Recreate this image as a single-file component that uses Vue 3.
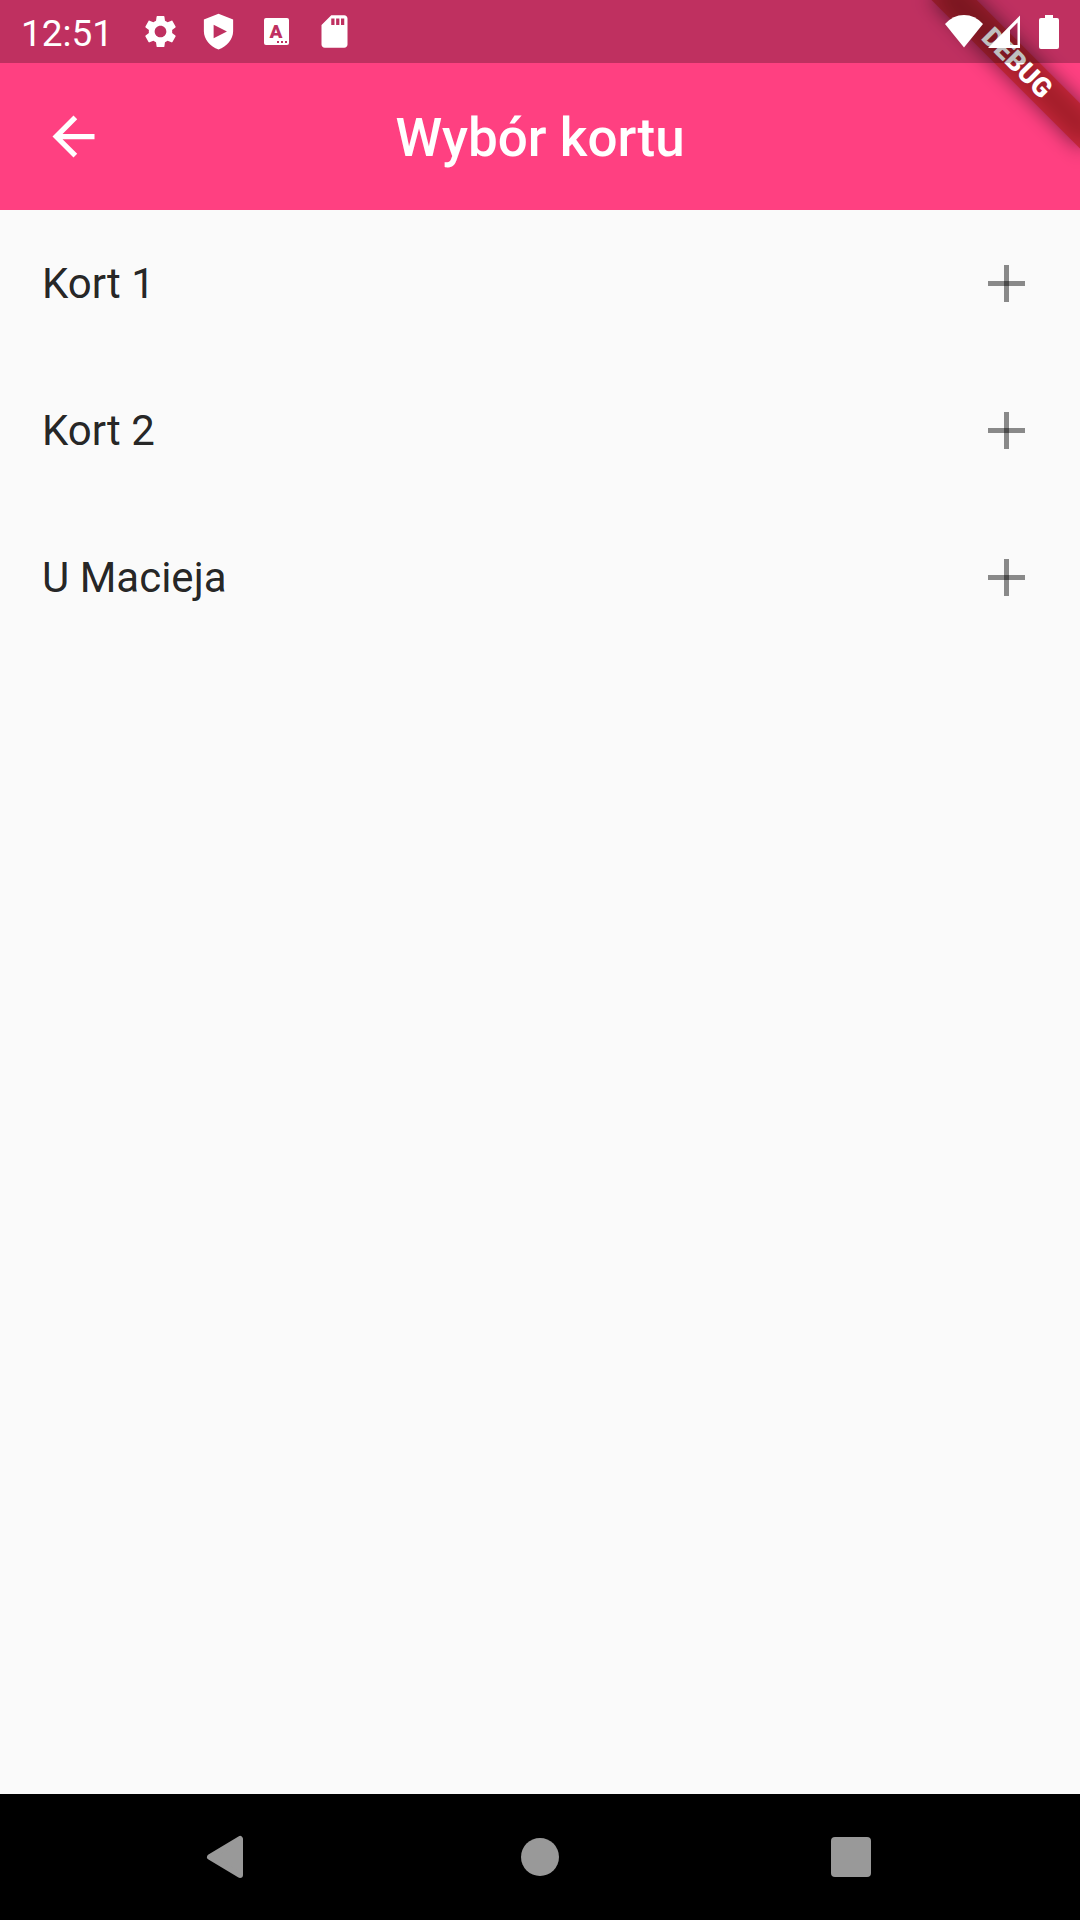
<script setup>
import { ref } from 'vue'

const courts = ref([
  { id: 1, name: 'Kort 1' },
  { id: 2, name: 'Kort 2' },
  { id: 3, name: 'U Macieja' },
])
</script>

<template>
  <div class="screen">
    <div class="status-bar">
      <div class="status-left">
        <time class="clock">12:51</time>
        <div class="notifications">
          <svg class="notification" viewBox="0 0 24 24" aria-hidden="true">
            <path d="M19.14 12.94c.04-.3.06-.61.06-.94 0-.32-.02-.64-.07-.94l2.03-1.58c.18-.14.23-.41.12-.61l-1.92-3.32c-.12-.22-.37-.29-.59-.22l-2.39.96c-.5-.38-1.03-.7-1.62-.94L14.4 2.81c-.04-.24-.24-.41-.48-.41h-3.84c-.24 0-.43.17-.47.41l-.36 2.54c-.59.24-1.13.57-1.62.94l-2.39-.96c-.22-.08-.47 0-.59.22L2.74 8.87c-.12.21-.08.47.12.61l2.03 1.58c-.05.3-.09.63-.09.94s.02.64.07.94l-2.03 1.58c-.18.14-.23.41-.12.61l1.92 3.32c.12.22.37.29.59.22l2.39-.96c.5.38 1.03.7 1.62.94l.36 2.54c.05.24.24.41.48.41h3.84c.24 0 .44-.17.47-.41l.36-2.54c.59-.24 1.13-.56 1.62-.94l2.39.96c.22.08.47 0 .59-.22l1.92-3.32c.12-.22.07-.47-.12-.61l-2.01-1.58zM12 15.6c-1.98 0-3.6-1.62-3.6-3.6s1.62-3.6 3.6-3.6 3.6 1.62 3.6 3.6-1.62 3.6-3.6 3.6z" />
          </svg>
          <svg class="notification" viewBox="0 0 24 24" aria-hidden="true">
            <path fill-rule="evenodd" d="M12 1 3 4.6v7.2c0 5 3.8 9.4 9 11.2 5.2-1.8 9-6.2 9-11.2V4.6zM9 7.8v8.4l8.2-4.2z" />
          </svg>
          <svg class="notification" viewBox="0 0 39 39" aria-hidden="true">
            <rect x="7" y="6" width="25" height="27" rx="2" />
            <text class="cutout letter" x="19" y="26" text-anchor="middle">A</text>
            <path class="cutout" d="M20 29h2v2h-2zM24 29h2v2h-2zM28 29h2v2h-2z" />
          </svg>
          <svg class="notification" viewBox="0 0 24 24" aria-hidden="true">
            <path d="M18 2h-8L4 8v12c0 1.1.9 2 2 2h12c1.1 0 2-.9 2-2V4c0-1.1-.9-2-2-2zm-6 6h-2V4h2v4zm3 0h-2V4h2v4zm3 0h-2V4h2v4z" />
          </svg>
        </div>
      </div>
      <div class="status-right">
        <div class="network">
          <svg width="38" height="34" viewBox="0 0 38 34" aria-hidden="true">
            <path d="M0 9Q8 0 19 0T38 9L19 32.5z" />
          </svg>
          <svg width="32" height="34" viewBox="0 0 32 34" aria-hidden="true">
            <path fill-rule="evenodd" d="M32 .5V33H0zM29.5 7.5L22 15v15h7.5z" />
          </svg>
        </div>
        <svg width="20" height="34" viewBox="0 0 20 34" aria-hidden="true">
          <path d="M6 0h8v3h4q2 0 2 2v27q0 2-2 2H2q-2 0-2-2V5q0-2 2-2h4z" />
        </svg>
      </div>
    </div>

    <header class="app-bar">
      <button class="back" type="button" aria-label="Wstecz">
        <svg class="icon" viewBox="0 0 24 24" aria-hidden="true">
          <path d="M20 11H7.83l5.59-5.59L12 4l-8 8 8 8 1.41-1.41L7.83 13H20v-2z" />
        </svg>
      </button>
      <h1 class="title">Wybór kortu</h1>
    </header>

    <main class="content">
      <ul class="courts">
        <li v-for="court in courts" :key="court.id" class="court">
          <span>{{ court.name }}</span>
          <button class="add" type="button" :aria-label="`Dodaj ${court.name}`">
            <svg class="icon" viewBox="0 0 63 63" aria-hidden="true">
              <rect x="13" y="29" width="37" height="5" />
              <rect x="29" y="13" width="5" height="37" />
            </svg>
          </button>
        </li>
      </ul>
    </main>

    <nav class="nav-bar">
      <button type="button" aria-label="Wstecz">
        <svg class="icon" viewBox="0 0 63 63" aria-hidden="true">
          <path d="M13 31L43 13V49z" stroke="#999" stroke-width="6" stroke-linejoin="round" />
        </svg>
      </button>
      <button type="button" aria-label="Ekran główny">
        <svg class="icon" viewBox="0 0 63 63" aria-hidden="true">
          <circle cx="32" cy="31" r="19" />
        </svg>
      </button>
      <button type="button" aria-label="Ostatnie aplikacje">
        <svg class="icon" viewBox="0 0 63 63" aria-hidden="true">
          <rect x="11" y="11" width="40" height="40" rx="4" />
        </svg>
      </button>
    </nav>

    <div class="debug-corner">
      <div class="ribbon">DEBUG</div>
    </div>
  </div>
</template>

<style>
body {
  margin: 0;
}
</style>

<style scoped>
.screen {
  position: relative;
  display: flex;
  flex-direction: column;
  min-height: 100vh;
  background: #fafafa;
  font-family: Roboto, "Noto Sans", sans-serif;
}

svg {
  display: block;
  flex: none;
  fill: currentColor;
}

button {
  display: flex;
  align-items: center;
  justify-content: center;
  margin: 0;
  padding: 0;
  border: 0;
  background: none;
  color: inherit;
  cursor: pointer;
}

.icon {
  width: 63px;
  height: 63px;
}

/* The scrim darkens both the app bar colour and the ribbon beneath it. */
.status-bar {
  position: relative;
  z-index: 2;
  display: flex;
  align-items: center;
  justify-content: space-between;
  height: 63px;
  padding: 0 21px;
  background: rgba(0, 0, 0, 0.25);
  color: #fff;
}

.screen::before {
  content: "";
  position: absolute;
  inset: 0 0 auto;
  height: 63px;
  background: #ff4081;
}

.status-left {
  display: flex;
  align-items: center;
  gap: 28px;
}

.clock,
.title {
  padding-top: 4px;
}

.clock {
  font-size: 37px;
  line-height: 42px;
}

.notifications {
  display: flex;
  gap: 19px;
}

.notification {
  width: 39px;
  height: 39px;
}

.cutout {
  fill: #bf3061;
}

.letter {
  font-size: 19px;
  font-weight: 900;
}

.status-right {
  display: flex;
  gap: 19px;
}

.network {
  display: flex;
  gap: 5px;
}

.app-bar {
  display: grid;
  grid-template-columns: 147px 1fr 147px;
  align-items: center;
  height: 147px;
  background: #ff4081;
  color: #fff;
}

.back {
  height: 147px;
}

.title {
  margin: 0;
  font-size: 53px;
  font-weight: 500;
  line-height: 63px;
  text-align: center;
}

.content {
  flex: 1;
}

.courts {
  margin: 0;
  padding: 0;
  list-style: none;
}

.court {
  display: flex;
  align-items: center;
  justify-content: space-between;
  height: 147px;
  padding: 0 42px;
  color: rgba(0, 0, 0, 0.87);
  font-size: 42px;
  line-height: 63px;
}

.add {
  color: rgba(0, 0, 0, 0.45);
}

.nav-bar {
  display: grid;
  grid-template-columns: repeat(3, 1fr);
  height: 126px;
  padding: 0 73px;
  background: #000;
  color: #999;
}

.debug-corner {
  position: absolute;
  top: 0;
  right: 0;
  z-index: 1;
  width: 210px;
  height: 210px;
  overflow: hidden;
  pointer-events: none;
}

.ribbon {
  position: absolute;
  top: 0;
  left: 100%;
  width: 210px;
  height: 32px;
  color: #fff;
  font-size: 27px;
  font-weight: 900;
  line-height: 32px;
  text-align: center;
  transform: rotate(45deg) translate(-50%, 73px);
  transform-origin: 0 0;
}

/* Soft shadow below, translucent red above it. */
.ribbon::before,
.ribbon::after {
  content: "";
  position: absolute;
  inset: 0;
}

.ribbon::before {
  z-index: -2;
  background: rgba(0, 0, 0, 0.5);
  filter: blur(10px);
}

.ribbon::after {
  z-index: -1;
  background: rgba(183, 28, 28, 0.63);
}
</style>
